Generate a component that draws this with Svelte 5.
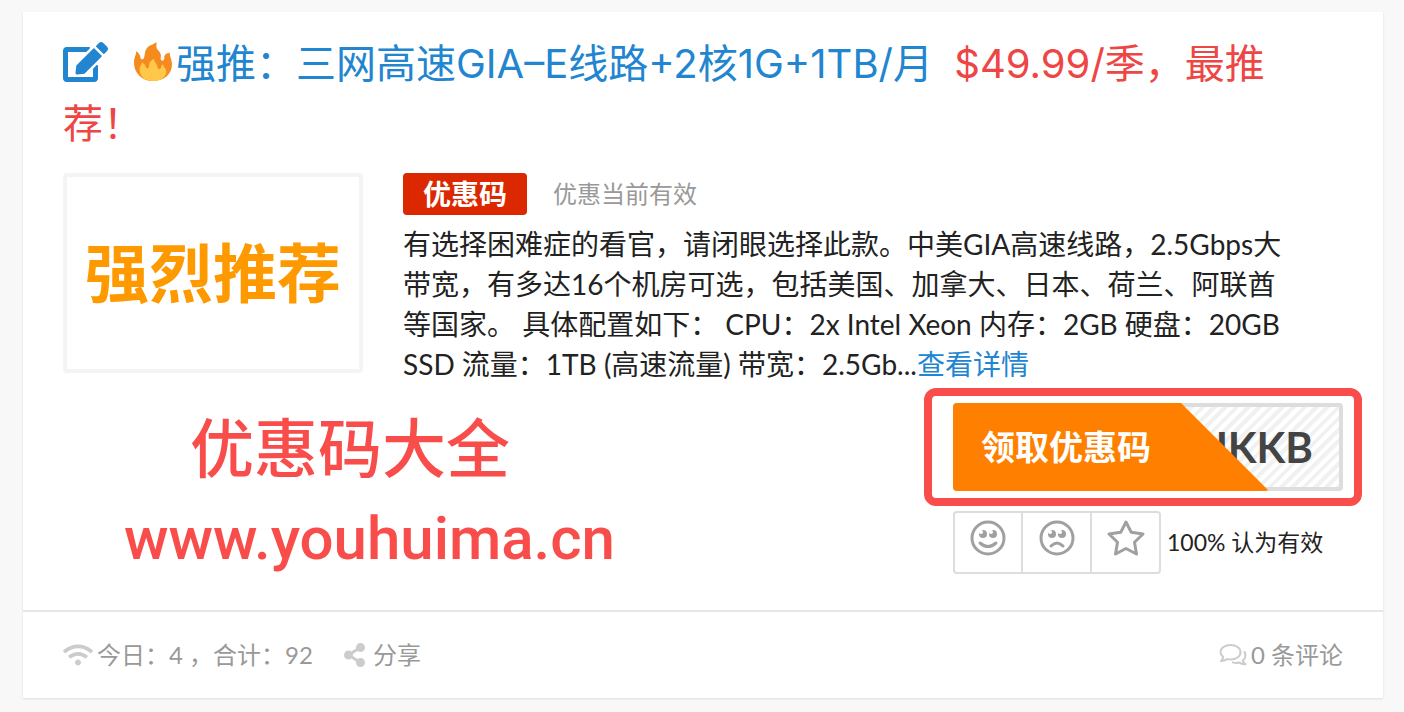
<script lang="ts">
    type Vote = "up" | "down" | "star";

    let vote: Vote | null = $state(null);
    const stats = {today: 4, total: 92, comments: 0, rate: 100};

    const setVote = (v: Vote) => {
        vote = vote === v ? null : v;
    }
</script>

<article class="card">
    <div class="content">
        <h2>
            <a href="#detail">
                <svg class="edit" viewBox="0 0 576 512" aria-hidden="true">
                    <path d="M402.6 83.2l90.2 90.2c3.8 3.8 3.8 10 0 13.8L274.4 405.6l-92.8 10.3c-12.4 1.4-22.9-9.1-21.5-21.5l10.3-92.8L388.8 83.2c3.8-3.8 10-3.8 13.8 0zm162-22.900l-48.800-48.800c-15.200-15.200-39.900-15.200-55.200 0l-35.400 35.400c-3.800 3.800-3.800 10 0 13.800l90.200 90.200c3.800 3.800 10 3.800 13.800 0l35.400-35.400c15.200-15.300 15.200-40 0-55.200zM384 346.200V448H64V128h229.800c3.200 0 6.200-1.300 8.500-3.500l40-40c7.600-7.600 2.200-20.500-8.500-20.500H48C21.500 64 0 85.500 0 112v352c0 26.500 21.500 48 48 48h352c26.500 0 48-21.500 48-48V306.200c0-10.700-12.900-16-20.500-8.500l-40 40c-2.200 2.300-3.500 5.300-3.500 8.500z"/>
                </svg><svg class="fire" viewBox="0 0 114 117" aria-hidden="true">
                    <path fill="#f58a1f" d="M57 117C24 117 0 93 0 62C0 46 7 40 6 28C14 32 19 39 20 49C22 54 28 53 30 47C34 36 31 29 39 18C45 9 58 9 67 0C69 8 65 13 69 20C74 28 84 33 80 49C79 57 88 59 91 51C92 45 89 43 95 37C99 33 104 35 107 31C106 44 114 51 114 67C114 96 91 117 57 117Z"/>
                    <path fill="#ffc84a" d="M57 117C33 117 17 103 17 83C17 72 24 69 23 61C30 64 34 69 36 76C40 82 45 80 45 73C45 62 50 54 61 50C59 60 68 62 70 73C71 81 75 84 80 79C83 75 80 71 87 67C87 75 97 79 97 90C95 107 80 117 57 117Z"/>
                </svg>强推：三网高速GIA–E线路+2核1G+1TB/月
                <span class="price">$49.99/季，最推荐！</span>
            </a>
        </h2>

        <div class="intro">
            <a class="thumb" href="#detail">强烈推荐</a>
            <div class="text">
                <div class="meta">
                    <span class="badge">优惠码</span>
                    <span class="status">优惠当前有效</span>
                </div>
                <p>有选择困难症的看官，请闭眼选择此款。中美GIA高速线路，2.5Gbps大带宽，有多达16个机房可选，包括美国、加拿大、日本、荷兰、阿联酋等国家。 具体配置如下： CPU：2x Intel Xeon 内存：2GB 硬盘：20GB SSD 流量：1TB (高速流量) 带宽：2.5Gb...<a href="#detail">查看详情</a></p>
            </div>
        </div>

        <div class="bottom">
            <div class="site">
                <div class="site-name">优惠码大全</div>
                <div class="site-url">www.youhuima.cn</div>
            </div>
            <div class="actions">
                <div class="coupon-wrap">
                    <button class="coupon">
                        <span class="code">JKKB</span>
                        <span class="cover">领取优惠码</span>
                    </button>
                </div>
                <div class="rating">
                    <div class="votes">
                        <button aria-label="有效" aria-pressed={vote === "up"} onclick={() => setVote("up")}>
                            <svg viewBox="0 0 36 36" aria-hidden="true">
                                <circle cx="18" cy="18" r="16" class="line"/>
                                <path class="line" d="M10 23Q18 30 26 23"/>
                                <circle cx="13" cy="14" r="4"/><circle cx="23" cy="14" r="4"/>
                                <circle cx="11" cy="12" r="2" class="eye"/><circle cx="21" cy="12" r="2" class="eye"/>
                            </svg>
                        </button>
                        <button aria-label="无效" aria-pressed={vote === "down"} onclick={() => setVote("down")}>
                            <svg viewBox="0 0 36 36" aria-hidden="true">
                                <circle cx="18" cy="18" r="16" class="line"/>
                                <path class="line" d="M12 26Q18 20 24 26"/>
                                <circle cx="13" cy="14" r="4"/><circle cx="23" cy="14" r="4"/>
                                <circle cx="11" cy="12" r="2" class="eye"/><circle cx="21" cy="12" r="2" class="eye"/>
                            </svg>
                        </button>
                        <button aria-label="收藏" aria-pressed={vote === "star"} onclick={() => setVote("star")}>
                            <svg class="star" viewBox="0 0 38 36" aria-hidden="true">
                                <path class="line" d="M19 2L24.200 12.200L36 14L27.500 22.300L29.500 34L19 28.500L8.500 34L10.500 22.300L2 14L13.800 12.200Z"/>
                            </svg>
                        </button>
                    </div>
                    <span class="rate">{stats.rate}% 认为有效</span>
                </div>
            </div>
        </div>
    </div>

    <footer>
        <span class="item">
            <svg class="wifi" viewBox="0 0 640 512" aria-hidden="true">
                <path d="M634.910 154.880C457.740-8.990 182.190-8.930 5.090 154.880c-6.660 6.160-6.790 16.590-.350 22.980l34.240 33.970c6.140 6.100 16.020 6.230 22.400.380 145.920-133.680 371.300-133.710 517.250 0 6.380 5.850 16.260 5.710 22.400-.380l34.240-33.970c6.430-6.390 6.300-16.820-.360-22.980zM320 352c-35.350 0-64 28.650-64 64s28.650 64 64 64 64-28.650 64-64-28.650-64-64-64zm202.670-83.590c-115.260-101.930-290.210-101.820-405.340 0-6.900 6.100-7.120 16.690-.570 23.150l34.440 33.990c6 5.920 15.660 6.320 22.050.800 83.950-72.570 209.740-72.410 293.490 0 6.390 5.520 16.050 5.130 22.050-.800l34.440-33.990c6.560-6.460 6.330-17.060-.560-23.150z"/>
            </svg>
            今日：{stats.today} ，合计：{stats.total}
        </span>
        <a class="item share" href="#share">
            <svg viewBox="0 0 448 512" aria-hidden="true">
                <path d="M352 320c-22.608 0-43.387 7.819-59.790 20.895l-102.486-64.054a96.551 96.551 0 0 0 0-41.683l102.486-64.054C308.613 184.181 329.392 192 352 192c53.019 0 96-42.981 96-96S405.019 0 352 0s-96 42.981-96 96c0 7.158.790 14.130 2.276 20.841L155.790 180.895C139.387 167.819 118.608 160 96 160c-53.019 0-96 42.981-96 96s42.981 96 96 96c22.608 0 43.387-7.819 59.790-20.895l102.486 64.054A96.301 96.301 0 0 0 256 416c0 53.019 42.981 96 96 96s96-42.981 96-96-42.981-96-96-96z"/>
            </svg>
            分享
        </a>
        <a class="item comments" href="#comments">
            <svg viewBox="0 0 28 24" aria-hidden="true">
                <path class="line" d="M11.500 2C17 2 21.500 5 21.500 9.300S17 16.500 11.500 16.500Q9.800 16.500 8.300 16.100Q5.500 18 2 18Q4.200 16 4.200 14Q1.500 12 1.500 9.300C1.500 5 6 2 11.500 2Z"/>
                <path class="line" d="M25.500 9Q28 14.500 23.700 17.500Q24.300 20 26.500 21.200Q22.500 21.500 20.500 19.500Q17 20.500 13.800 19.400"/>
            </svg>
            {stats.comments} 条评论
        </a>
    </footer>
</article>

<style>
    :global(body) {
        background: #f8f8f8;
    }

    .card {
        margin: 12px 21px 12px 23px;
        background: white;
        box-shadow: 0 1px 2px #ddd;
        color: #222;
        font-family: Lato, "Noto Sans CJK SC", sans-serif;
    }

    a {
        color: #2185d0;
        text-decoration: none;
    }

    button {
        padding: 0;
        cursor: pointer;
        font-family: inherit;
    }

    .content {
        padding: 22px 40px 36px;
    }

    h2 {
        margin: 0;
        font-family: Inter, "Noto Sans CJK SC", sans-serif;
        font-size: 40px;
        font-weight: 400;
        line-height: 60px;
    }

    .edit {
        width: 45px;
        height: 40px;
        margin-right: 26px;
        vertical-align: -4px;
        fill: currentColor;
    }

    .fire {
        width: 38px;
        height: 39px;
        margin-right: 4px;
        vertical-align: -3px;
    }

    .price {
        margin-left: 10px;
        color: #ee4545;
    }

    .intro {
        display: flex;
        align-items: flex-start;
        gap: 40px;
        margin-top: 19px;
    }

    .thumb {
        display: flex;
        flex: none;
        align-items: center;
        justify-content: center;
        box-sizing: border-box;
        width: 300px;
        height: 200px;
        padding-bottom: 8px;
        border: 4px solid #f4f4f4;
        border-radius: 4px;
        color: #ff9900;
        font-size: 64px;
        font-weight: bold;
    }

    .text {
        flex: 1;
        padding-right: 40px;
    }

    .meta {
        display: flex;
        align-items: center;
        gap: 26px;
    }

    .badge {
        padding: 0 20px;
        border-radius: 4px;
        background: #db2800;
        color: white;
        font-size: 28px;
        font-weight: bold;
        line-height: 42px;
    }

    .status {
        color: #999;
        font-size: 24px;
        line-height: 42px;
    }

    p {
        margin: 9px 0 0;
        font-size: 28px;
        line-height: 40px;
    }

    .bottom {
        display: flex;
        align-items: flex-start;
        justify-content: space-between;
        margin-top: 19px;
    }

    .site {
        padding-left: 61px;
        color: #f84d4a;
        font-weight: 500;
    }

    .site-name {
        padding-left: 66px;
        font-family: "Noto Sans CJK SC", sans-serif;
        font-size: 64px;
        line-height: 82px;
    }

    .site-url {
        margin-top: 19px;
        font-family: Roboto, sans-serif;
        font-size: 60px;
        line-height: 70px;
    }

    .actions {
        width: 390px;
    }

    .coupon-wrap {
        position: relative;
    }

    /* red frame around the coupon */
    .coupon-wrap::after {
        content: "";
        position: absolute;
        inset: -15px -19px -15px -29px;
        border: 8px solid #f84d4a;
        border-radius: 12px;
        pointer-events: none;
    }

    .coupon {
        display: grid;
        width: 100%;
        height: 88px;
        border: 0;
        background: none;
    }

    .code, .cover {
        display: flex;
        grid-area: 1 / 1;
        align-items: center;
        box-sizing: border-box;
        border-radius: 4px;
        font-weight: bold;
    }

    .code {
        justify-content: flex-end;
        padding-right: 26px;
        border: 4px solid #ddd;
        background: repeating-linear-gradient(135deg, #fff 0 4px, #f1f1f1 4px 8px);
        color: #444;
        font-size: 42px;
    }

    .cover {
        width: 316px;
        padding: 0 0 4px 28px;
        background: #ff8000;
        clip-path: polygon(0 0, 228px 0, 100% 100%, 0 100%);
        color: white;
        font-size: 34px;
    }

    .rating {
        display: flex;
        align-items: center;
        gap: 6px;
        margin-top: 20px;
        font-size: 23px;
    }

    .rate {
        padding-bottom: 4px;
    }

    .votes {
        display: flex;
        border: 2px solid #ddd;
        border-radius: 4px;
    }

    .votes button {
        display: flex;
        justify-content: center;
        box-sizing: border-box;
        width: 69px;
        height: 59px;
        padding-top: 7px;
        border: 0;
        background: none;
        color: #a0a0a0;
    }

    .votes button + button {
        border-left: 2px solid #ddd;
    }

    .votes button:first-child {
        width: 66px;
    }

    .votes svg {
        width: 36px;
        height: 36px;
        fill: currentColor;
    }

    .votes .star {
        width: 38px;
    }

    svg .line {
        fill: none;
        stroke: currentColor;
        stroke-width: 3;
        stroke-linecap: round;
        stroke-linejoin: round;
    }

    svg .eye {
        fill: white;
    }

    footer {
        display: flex;
        align-items: center;
        padding: 24px 40px;
        border-top: 2px solid #e6e6e6;
        color: #999;
        font-size: 24px;
        line-height: 38px;
    }

    .item {
        display: flex;
        align-items: center;
        gap: 4px;
        color: #999;
    }

    .item svg {
        height: 24px;
        fill: currentColor;
        color: #ccc;
    }

    .share {
        gap: 8px;
        margin-left: 31px;
    }

    .comments {
        margin-left: auto;
    }

    .comments .line {
        stroke-width: 2;
    }
</style>
